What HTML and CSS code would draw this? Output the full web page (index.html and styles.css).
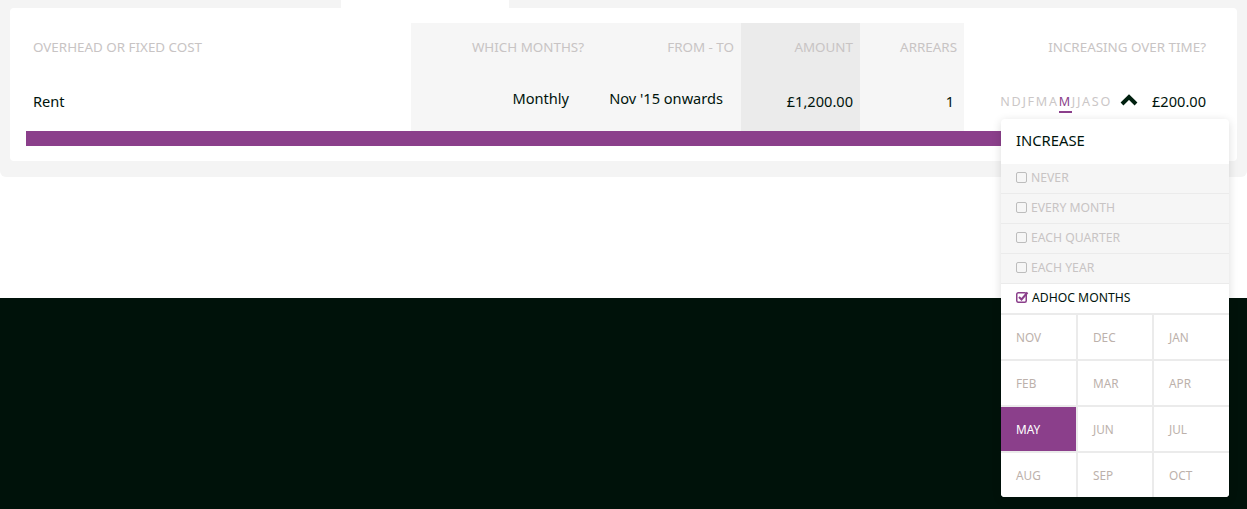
FILE: index.html
```html
<!DOCTYPE html>
<html lang="en">
<head>
    <meta charset="UTF-8">
    <meta name="viewport" content="width=device-width, initial-scale=1.0">
    <title>Overheads</title>
    <link rel="stylesheet" href="styles.css">
</head>
<body>
    <div class="panel">
        <div class="tabs">
            <div class="tab active"></div>
        </div>

        <div class="card">
            <div class="cost-grid">
                <div class="head col-name">OVERHEAD OR FIXED COST</div>
                <div class="head shade">WHICH MONTHS?</div>
                <div class="head shade">FROM - TO</div>
                <div class="head shade-dark">AMOUNT</div>
                <div class="head shade">ARREARS</div>
                <div class="head col-increase">INCREASING OVER TIME?</div>

                <div class="cell col-name">Rent</div>
                <div class="cell shade raised months-cell">Monthly</div>
                <div class="cell shade raised range-cell">Nov '15 onwards</div>
                <div class="cell shade-dark">£1,200.00</div>
                <div class="cell shade arrears-cell">1</div>
                <div class="cell col-increase">
                    <span class="month-letters">NDJFMA<span class="current">M</span>JJASO</span>
                    <svg class="chevron" width="18" height="12" viewBox="0 0 18 12">
                        <polyline points="2,10 9,3 16,10" fill="none" stroke="#00200f" stroke-width="4" />
                    </svg>
                    <span class="increase-amount">£200.00</span>

                    <div class="dropdown">
                        <div class="dropdown-title">INCREASE</div>
                        <div class="option"><span class="box"></span>NEVER</div>
                        <div class="option"><span class="box"></span>EVERY MONTH</div>
                        <div class="option"><span class="box"></span>EACH QUARTER</div>
                        <div class="option"><span class="box"></span>EACH YEAR</div>
                        <div class="option selected">
                            <svg class="box-checked" width="13" height="12" viewBox="0 0 13 12">
                                <rect x="0.75" y="1.75" width="9.5" height="9.5" rx="1.5" fill="none" stroke="#8b3f8b" stroke-width="1.5" />
                                <polyline points="3,6 5.5,8.5 11.5,1.5" fill="none" stroke="#8b3f8b" stroke-width="2" />
                            </svg>
                            ADHOC MONTHS
                        </div>
                        <div class="months">
                            <div class="month">NOV</div>
                            <div class="month">DEC</div>
                            <div class="month">JAN</div>
                            <div class="month">FEB</div>
                            <div class="month">MAR</div>
                            <div class="month">APR</div>
                            <div class="month on">MAY</div>
                            <div class="month">JUN</div>
                            <div class="month">JUL</div>
                            <div class="month">AUG</div>
                            <div class="month">SEP</div>
                            <div class="month">OCT</div>
                        </div>
                    </div>
                </div>
            </div>
            <div class="bar"></div>
        </div>
    </div>

    <div class="gap"></div>
    <div class="dark"></div>
</body>
</html>
```

FILE: styles.css
```css
* {
    margin: 0;
    padding: 0;
    box-sizing: border-box;
}

body {
    width: 1247px;
    height: 509px;
    overflow: hidden;
    background: #fff;
    font-family: 'Noto Sans', 'Open Sans', sans-serif;
    color: #00140c;
}

.panel {
    background: #f4f4f4;
    padding: 0 10px 16px;
    border-radius: 0 0 6px 6px;
}

.tabs {
    display: flex;
    height: 8px;
    padding-left: 331px;
}

.tab.active {
    width: 168px;
    background: #fff;
}

.card {
    background: #fff;
    border-radius: 4px;
    padding: 15px 16px;
}

.cost-grid {
    display: grid;
    grid-template-columns: 385px 180px 150px 119px 104px 1fr;
    grid-template-rows: 48px 60px;
}

.head,
.cell {
    display: flex;
    align-items: center;
    justify-content: flex-end;
    padding: 0 7px;
}

.head {
    font-size: 13.4px;
    color: #c8c4c4;
}

.cell {
    font-size: 14.6px;
}

.cell.raised {
    padding-bottom: 6px;
}

.months-cell {
    padding-right: 22px;
}

.range-cell {
    padding-right: 18px;
}

.arrears-cell {
    padding-right: 10px;
}

.col-name {
    justify-content: flex-start;
}

.shade {
    background: #f6f6f6;
}

.shade-dark {
    background: #ebebeb;
}

.col-increase {
    position: relative;
    padding-right: 15px;
}

.month-letters {
    font-size: 12.6px;
    letter-spacing: 1.7px;
    color: #cbc7c7;
}

.month-letters .current {
    color: #8b3f8b;
    border-bottom: 2px solid #8b3f8b;
    padding-bottom: 1px;
}

.chevron {
    margin: 0 14px 2px 8px;
}

.increase-amount {
    font-size: 14.6px;
}

.bar {
    height: 15px;
    background: #8b3f8b;
}

.dropdown {
    position: absolute;
    top: 48px;
    left: 37px;
    width: 228px;
    background: #fff;
    border-radius: 4px;
    box-shadow: 0 2px 10px rgba(0, 0, 0, 0.14);
    overflow: hidden;
    z-index: 2;
}

.dropdown-title {
    height: 45px;
    display: flex;
    align-items: center;
    padding: 0 15px 4px;
    font-size: 14.8px;
}

.option {
    height: 30px;
    display: flex;
    align-items: center;
    gap: 4px;
    padding: 0 15px 3px;
    background: #f6f6f6;
    border-bottom: 1px solid #ebebeb;
    font-size: 12.2px;
    color: #c8c4c4;
}

.option .box {
    width: 11px;
    height: 11px;
    border: 1.5px solid #bdbdbd;
    border-radius: 2px;
}

.option.selected {
    background: #fff;
    color: #00140c;
    gap: 3px;
}

.months {
    display: grid;
    grid-template-columns: 75px 74px 75px;
    grid-auto-rows: 44px;
    gap: 2px;
    background: #ebebeb;
    border-top: 1px solid #ebebeb;
}

.month {
    display: flex;
    align-items: center;
    padding-left: 15px;
    background: #fff;
    font-size: 11.8px;
    color: #bcb1ab;
}

.month.on {
    background: #8b3f8b;
    color: #fff;
}

.gap {
    height: 121px;
}

.dark {
    height: 220px;
    background: #00120a;
}
```
